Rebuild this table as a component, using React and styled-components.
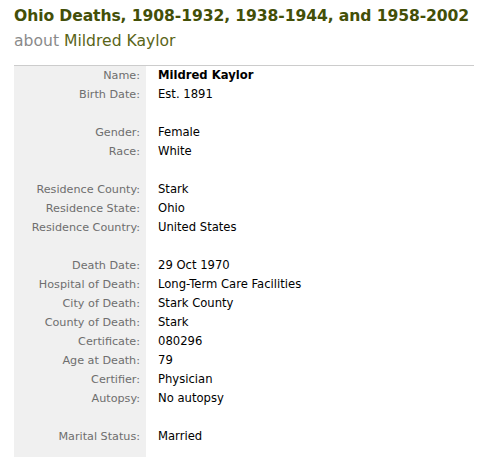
import React from "react"
import styled, { createGlobalStyle } from "styled-components"

const GlobalStyle = createGlobalStyle`
  html, body {
    margin: 0;
    padding: 0;
    background: #fff;
  }
`

const record = [
  { label: "Name", value: "Mildred Kaylor", strong: true },
  { label: "Birth Date", value: "Est. 1891" },
  null,
  { label: "Gender", value: "Female" },
  { label: "Race", value: "White" },
  null,
  { label: "Residence County", value: "Stark" },
  { label: "Residence State", value: "Ohio" },
  { label: "Residence Country", value: "United States" },
  null,
  { label: "Death Date", value: "29 Oct 1970" },
  { label: "Hospital of Death", value: "Long-Term Care Facilities" },
  { label: "City of Death", value: "Stark County" },
  { label: "County of Death", value: "Stark" },
  { label: "Certificate", value: "080296" },
  { label: "Age at Death", value: "79" },
  { label: "Certifier", value: "Physician" },
  { label: "Autopsy", value: "No autopsy" },
  null,
  { label: "Marital Status", value: "Married" },
]

const App = () => {
  return (
    <Page>
      <GlobalStyle />
      <Header>
        <Title>Ohio Deaths, 1908-1932, 1938-1944, and 1958-2002</Title>
        <Subtitle>
          about <Person>Mildred Kaylor</Person>
        </Subtitle>
      </Header>
      <Table>
        {record.map((row, index) =>
          row ? (
            <Row key={index}>
              <Label>{row.label}:</Label>
              <Value $strong={row.strong}>{row.value}</Value>
            </Row>
          ) : (
            <Row key={index}>
              <Label />
              <Value />
            </Row>
          )
        )}
        <Row>
          <Label $tail />
          <Value />
        </Row>
      </Table>
    </Page>
  )
}
export default App

const Page = styled.div`
  padding: 5px 14px 0 14px;
  width: 460px;
`

const Header = styled.div`
  padding-bottom: 14px;
`

const Title = styled.h1`
  margin: 0;
  font-family: "DejaVu Sans", Verdana, sans-serif;
  font-weight: bold;
  font-size: 15.6px;
  line-height: 22px;
  color: #434f08;
  letter-spacing: -0.1px;
  white-space: nowrap;
`

const Subtitle = styled.div`
  margin-top: 4px;
  font-family: "DejaVu Sans", Verdana, sans-serif;
  font-size: 15.6px;
  line-height: 20px;
  color: #8a8a8a;
`

const Person = styled.span`
  color: #5a6518;
`

const Table = styled.div`
  border-top: 1px solid #cccccc;
  display: grid;
  grid-template-columns: 132px 1fr;
`

const Row = styled.div`
  display: contents;
`

const Label = styled.div`
  background: #f0f0f0;
  height: ${(p) => (p.$tail ? "11px" : "19px")};
  line-height: 19px;
  padding-right: 6px;
  text-align: right;
  font-family: "DejaVu Sans", Verdana, sans-serif;
  font-size: 11.2px;
  color: #6e6e6e;
  white-space: nowrap;
`

const Value = styled.div`
  height: 19px;
  line-height: 19px;
  padding-left: 12px;
  font-family: "DejaVu Sans", Verdana, sans-serif;
  font-size: 11.6px;
  font-weight: ${(p) => (p.$strong ? "bold" : "normal")};
  color: #000;
  white-space: nowrap;
`
